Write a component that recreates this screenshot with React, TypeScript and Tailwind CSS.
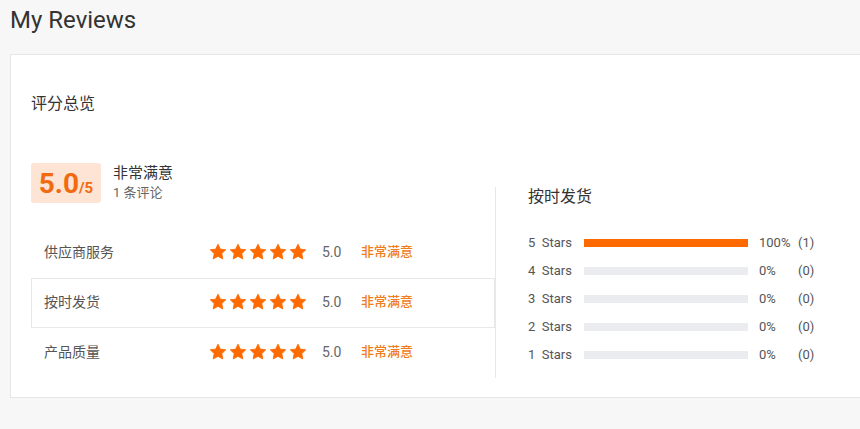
const FONT = "font-['Roboto','Noto_Sans_CJK_SC',sans-serif]";

const ROWS = [
  { label: "供应商服务", active: false },
  { label: "按时发货", active: true },
  { label: "产品质量", active: false },
];

const DIST = [
  { star: 5, pct: 100, count: 1 },
  { star: 4, pct: 0, count: 0 },
  { star: 3, pct: 0, count: 0 },
  { star: 2, pct: 0, count: 0 },
  { star: 1, pct: 0, count: 0 },
];

function Star() {
  return (
    <svg width="18" height="18" viewBox="0 0 24 24" aria-hidden="true">
      <path
        d="M12 1.6l3.1 6.6 7.2.9-5.3 5 1.4 7.1L12 17.7l-6.4 3.5 1.4-7.1-5.3-5 7.2-.9z"
        fill="#ff6a00"
        stroke="#ff6a00"
        strokeWidth="1.2"
        strokeLinejoin="round"
      />
    </svg>
  );
}

export default function App() {
  return (
    <div className={`min-h-screen overflow-hidden bg-[#f7f7f7] ${FONT}`}>
      <h1 className="pl-[10px] pt-[4px] text-[24px] leading-[32px] text-[#333]">My Reviews</h1>

      <section className="ml-[10px] mt-[18px] w-[880px] border border-[#e6e6e6] bg-white px-[20px] pb-[19px] pt-[37px]">
        <h2 className="text-[16px] leading-[24px] text-[#333]">评分总览</h2>

        <div className="flex items-end">
          <div className="w-[464px]">
            <div className="mt-[47px] flex items-center gap-[12px]">
              <div className="flex h-[40px] w-[70px] items-baseline justify-center rounded-[3px] bg-[#fde4d4] pt-[3px] font-bold text-[#f26a10]">
                <span className="text-[28px] leading-[36px]">5.0</span>
                <span className="text-[15px]">/5</span>
              </div>
              <div>
                <p className="text-[15px] leading-[20px] text-[#333]">非常满意</p>
                <p className="text-[13px] leading-[20px] text-[#666]">1 条评论</p>
              </div>
            </div>

            <div className="mt-[25px]">
              {ROWS.map((row) => (
                <div
                  key={row.label}
                  className={`flex h-[50px] items-center border pb-[2px] pl-[12px] ${
                    row.active ? "border-[#e8e8e8]" : "border-transparent"
                  }`}
                >
                  <span className="w-[165px] text-[14px] text-[#555]">{row.label}</span>
                  <div className="flex gap-[2px]">
                    {Array.from({ length: 5 }).map((_, i) => (
                      <Star key={i} />
                    ))}
                  </div>
                  <span className="ml-[15px] w-[39px] text-[14px] text-[#666]">5.0</span>
                  <span className="text-[13px] font-medium text-[#f07c1c]">非常满意</span>
                </div>
              ))}
            </div>
          </div>

          <div className="h-[191px] border-l border-[#e8e8e8] pl-[32px]">
            <h3 className="text-[16px] leading-[20px] text-[#333]">按时发货</h3>
            <div className="mt-[22px]">
              {DIST.map((d) => (
                <div key={d.star} className="flex h-[28px] items-center text-[13px] text-[#555]">
                  <span className="w-[56px] whitespace-pre">{`${d.star}  Stars`}</span>
                  <div className="h-[8px] w-[164px] bg-[#ebecf0]">
                    <div className="h-full bg-[#ff6a00]" style={{ width: `${d.pct}%` }} />
                  </div>
                  <span className="ml-[11px] w-[39px]">{d.pct}%</span>
                  <span>({d.count})</span>
                </div>
              ))}
            </div>
          </div>
        </div>
      </section>
    </div>
  );
}
